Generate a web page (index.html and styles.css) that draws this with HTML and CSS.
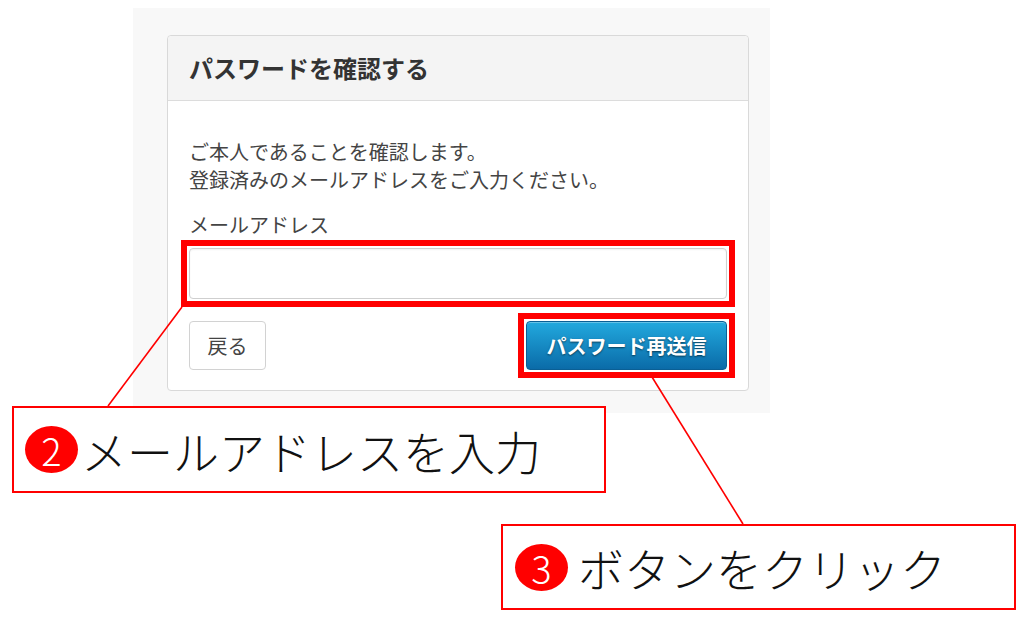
FILE: index.html
```html
<!DOCTYPE html>
<html lang="ja">
<head>
    <meta charset="UTF-8">
    <meta name="viewport" content="width=device-width, initial-scale=1.0">
    <title>パスワードを確認する</title>
    <link rel="stylesheet" href="styles.css">
</head>
<body>

    <!-- 画面キャプチャ部分 -->
    <div class="stage">
        <div class="panel">
            <div class="card">
                <div class="card-head">
                    <h2>パスワードを確認する</h2>
                </div>
                <div class="card-body">
                    <p class="lead">ご本人であることを確認します。<br>登録済みのメールアドレスをご入力ください。</p>
                    <label class="label" for="mail">メールアドレス</label>
                    <div class="mark">
                        <input type="text" id="mail" class="field">
                    </div>
                    <div class="actions">
                        <button class="btn">戻る</button>
                        <div class="mark">
                            <button class="btn btn-send">パスワード再送信</button>
                        </div>
                    </div>
                </div>
            </div>
        </div>
    </div>

    <!-- 説明用の吹き出し -->
    <svg class="leaders" width="1024" height="623">
        <line x1="182" y1="307" x2="108" y2="406"></line>
        <line x1="652" y1="377" x2="743" y2="524"></line>
    </svg>

    <div class="callout callout-2">
        <span class="num">2</span>
        <span class="note">メールアドレスを入力</span>
    </div>

    <div class="callout callout-3">
        <span class="num">3</span>
        <span class="note">ボタンをクリック</span>
    </div>

</body>
</html>
```

FILE: styles.css
```css
body {
    margin: 0;
    width: 1024px;
    height: 623px;
    position: relative;
    background-color: #fff;
    font-family: "Noto Sans CJK JP", "Noto Sans", sans-serif;
    color: #333;
    overflow: hidden;
}

.stage {
    padding: 8px 0 0 133px;
}

.panel {
    width: 637px;
    height: 405px;
    box-sizing: border-box;
    padding: 27px 21px 0 34px;
    background-color: #f8f8f8;
}

.card {
    background-color: #fff;
    border: 1px solid #d9d9d9;
    border-radius: 4px;
}

.card-head {
    height: 64px;
    padding: 0 21px;
    background-color: #f4f4f4;
    border-bottom: 1px solid #dcdcdc;
    border-radius: 4px 4px 0 0;
}

.card-head h2 {
    margin: 0;
    font-size: 24px;
    line-height: 64px;
    font-weight: bold;
    color: #333;
}

.card-body {
    display: flex;
    flex-direction: column;
    padding: 37px 21px 20px 21px;
}

.lead {
    margin: 0 0 17px 0;
    font-size: 20px;
    line-height: 28px;
    color: #444;
}

.label {
    font-size: 20px;
    line-height: 28px;
    color: #444;
    margin-bottom: 9px;
}

.mark {
    position: relative;
    display: flex;
    flex-direction: column;
}

.mark::after {
    content: "";
    position: absolute;
    left: -8px;
    right: -8px;
    top: -8px;
    bottom: -8px;
    border: 6px solid #ff0000;
    pointer-events: none;
}

.field {
    height: 51px;
    box-sizing: border-box;
    border: 1px solid #cfcfcf;
    border-radius: 4px;
    box-shadow: inset 0 1px 2px rgba(0, 0, 0, 0.06);
    background-color: #fff;
    margin: 0;
}

.actions {
    display: flex;
    justify-content: space-between;
    margin-top: 22px;
}

.btn {
    height: 49px;
    width: 77px;
    padding: 0;
    font-family: inherit;
    font-size: 20px;
    color: #444;
    background-color: #fff;
    border: 1px solid #d2d2d2;
    border-radius: 4px;
}

.btn-send {
    width: 201px;
    font-weight: bold;
    color: #fff;
    background: linear-gradient(#22a9de, #0a6ba8);
    border: 1px solid #0a5f95;
    box-shadow: inset 0 1px 0 rgba(255, 255, 255, 0.3);
    text-shadow: 0 1px 2px rgba(0, 0, 0, 0.55);
}

.leaders {
    position: absolute;
    left: 0;
    top: 0;
    pointer-events: none;
}

.leaders line {
    stroke: #ff0000;
    stroke-width: 1.6;
}

.callout {
    position: absolute;
    box-sizing: border-box;
    display: flex;
    align-items: center;
    border: 2px solid #ff0000;
    background-color: #fff;
    color: #111;
}

.callout-2 {
    left: 12px;
    top: 406px;
    width: 594px;
    height: 87px;
    padding-left: 11px;
}

.callout-3 {
    left: 501px;
    top: 524px;
    width: 515px;
    height: 86px;
    padding-left: 12px;
}

.num {
    width: 53px;
    height: 47px;
    border-radius: 50%;
    background-color: #ff0000;
    color: #fff;
    font-size: 38px;
    font-weight: 300;
    line-height: 47px;
    text-align: center;
    flex-shrink: 0;
}

.note {
    margin-left: 3px;
    font-size: 46px;
    font-weight: 300;
    line-height: 1;
}

.callout-3 .note {
    margin-left: 10px;
    letter-spacing: 0;
}
```
